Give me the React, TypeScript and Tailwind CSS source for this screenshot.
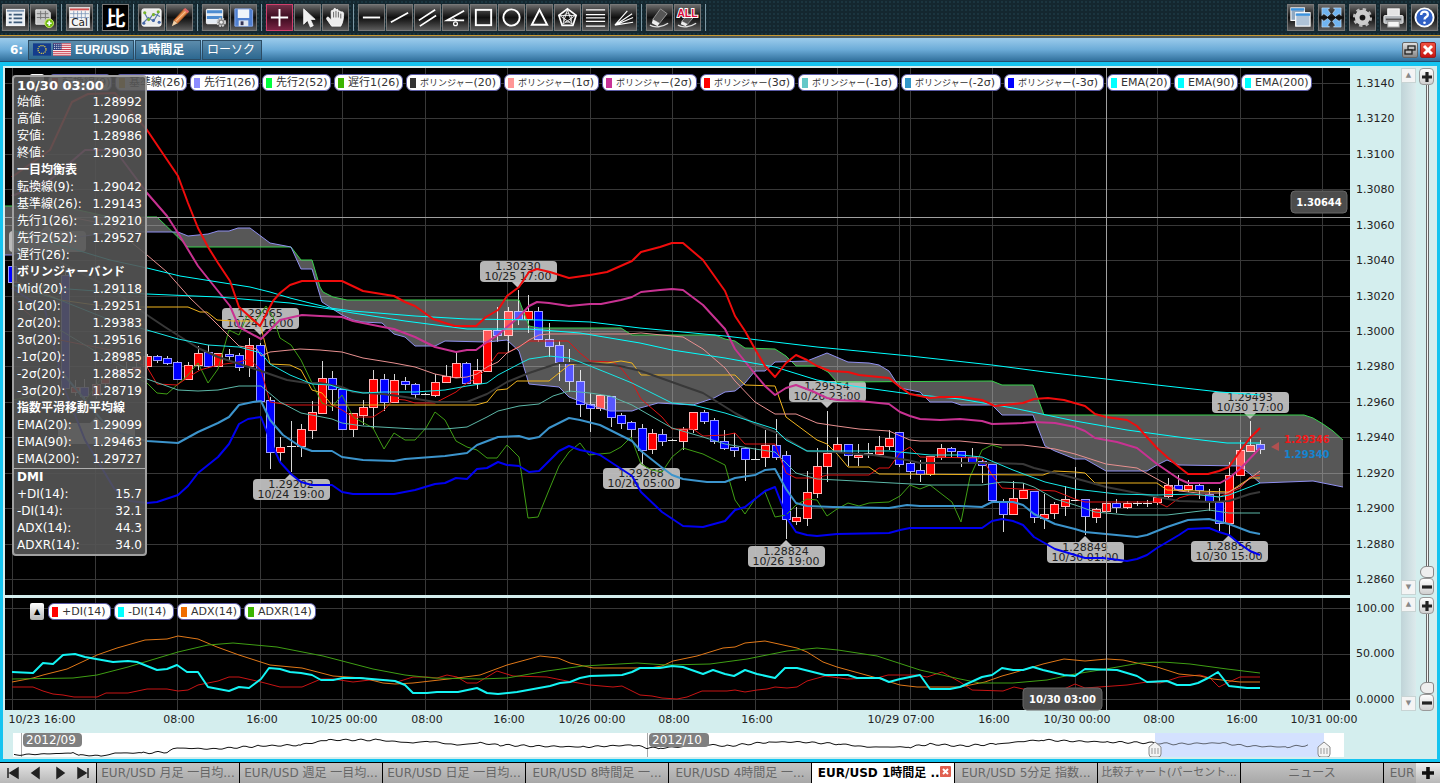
import type { ReactNode } from "react";

type Series = { color: string; width: number; points: string };
type Chip = { color: string; kana?: string; text: string; width: string };

// x, high, body top, body bottom, low, direction (u = up, d = down, n = flat)
const candles = `
12 262 266 282 285 d|65 270 275 388 392 d|75 380 387 392 396 u|84 379 387 396 404 d|96 376 384 395 399 u|105 372 378 383 388 u
116 366 370 374 378 d|126 362 369 372 377 u|136 360 367 371 376 u|147 354 356 366 368 u|157 355 356 360 363 d|167 356 358 363 365 d
177 361 362 379 379 d|188 362 365 379 379 u|198 346 353 365 370 u|208 345 352 366 368 d|218 353 353 366 367 u|229 349 354 355 360 d
239 353 355 367 371 d|249 338 345 366 377 u|260 343 345 401 401 d|270 397 400 452 469 d|280 437 447 452 463 u|291 421 446 447 472 n
301 424 429 446 457 u|312 401 412 430 439 u|322 361 378 413 413 u|332 371 378 389 411 d|342 389 389 429 429 d|353 413 413 429 437 u
363 400 407 415 425 u|373 370 379 407 429 u|384 374 379 402 411 d|394 374 380 402 403 u|405 377 381 384 390 d|415 383 384 394 398 d
425 393 394 394 395 n|435 374 382 395 397 u|446 365 376 382 383 u|456 352 363 377 377 u|466 362 363 383 383 d|477 359 370 383 389 u
487 330 330 371 371 u|497 307 330 335 342 d|508 307 311 335 353 u|518 290 311 319 325 d|528 295 311 319 333 u|538 307 311 339 342 d
549 323 339 346 357 d|559 341 345 362 381 d|569 349 363 381 392 d|580 370 381 404 417 d|590 393 404 408 432 d|600 394 395 408 411 u
611 396 396 417 427 d|621 413 415 423 429 d|631 421 422 429 438 d|642 424 428 450 465 d|652 429 433 449 454 u|662 429 434 441 446 d
672 439 440 440 441 n|683 427 429 441 450 u|693 412 412 429 433 u|704 410 412 421 424 d|714 418 420 441 444 d|724 430 441 448 450 d
734 433 447 450 457 d|745 447 448 459 481 d|755 448 459 459 460 n|765 430 445 457 467 u|776 419 445 457 460 d|786 451 455 519 539 d
796 507 517 521 525 u|807 471 492 518 526 u|817 448 466 493 498 u|827 411 453 466 482 u|837 437 444 452 453 u|848 444 444 455 466 d
858 444 455 457 466 u|868 443 453 453 458 n|879 436 446 454 456 u|889 430 438 446 450 u|899 432 432 464 467 d|910 461 463 471 479 d
920 460 470 474 482 d|930 456 456 474 476 u|941 444 448 457 460 u|951 447 448 451 458 d|961 451 451 457 467 d|972 448 457 462 464 d
982 460 461 465 483 d|992 464 464 500 502 d|1003 499 501 514 532 d|1013 481 498 514 515 u|1023 483 490 498 499 u|1034 491 491 517 523 d
1044 494 514 518 529 u|1054 502 504 513 519 u|1065 486 499 506 516 u|1075 467 500 500 501 n|1085 499 499 516 535 d|1096 508 509 517 523 u
1106 499 503 511 512 u|1116 499 503 507 513 d|1127 501 503 507 509 u|1137 501 503 503 506 n|1147 500 503 503 507 n|1157 496 497 502 505 u
1168 478 485 496 498 u|1178 475 485 489 491 d|1188 480 485 489 492 u|1199 483 485 490 499 d|1209 489 494 501 511 d|1219 488 502 523 531 d
1229 462 475 523 535 u|1240 440 450 475 475 u|1250 421 445 451 452 u|1260 440 444 449 454 d`
  .trim()
  .split(/[|\n]/)
  .map((row) => {
    const [x, high, top, bottom, low, dir] = row.split(" ");
    return { x: +x, high: +high, top: +top, bottom: +bottom, low: +low, dir };
  });

const spanB =
  "5,206 12,206 60,206 110,217 157,217 188,247 291,247 301,260 312,260 320,287 323,292 333,297 347,300 519,300 529,326 539,328 621,328 632,335 715,335 725,339 735,341 745,348 775,349 786,356 796,366 817,366 828,372 837,382 992,381 1002,385 1033,385 1044,415 1304,415 1313,418 1323,424 1333,431 1343,440";
const spanA =
  "5,255 12,255 60,240 110,232 178,232 188,236 208,234 218,231 229,231 238,228 250,228 270,243 291,247 301,269 312,269 322,302 342,315 353,320 363,322 382,323 394,334 405,337 415,346 435,346 445,341 487,342 507,340 519,351 529,384 539,385 559,387 569,397 590,405 610,411 632,411 640,408 658,403 693,405 714,398 725,392 735,391 745,383 755,371 765,371 775,362 807,361 827,353 848,362 869,363 879,365 889,371 900,388 920,392 930,402 952,402 961,405 992,405 1002,415 1033,415 1045,446 1055,451 1075,459 1085,459 1106,471 1147,471 1157,465 1167,460 1179,465 1240,466 1250,474 1260,483 1313,481 1323,483 1343,487";
const cloud = spanB + " " + spanA.split(" ").reverse().join(" ");

const overlays: Series[] = [
  { color: "#38d04c", width: 1, points: spanB },
  { color: "#8f8ff0", width: 1, points: spanA },
  // lagging span
  { color: "#3f9e14", width: 1, points: "12,400 40,395 75,415 100,380 125,372 147,383 157,393 167,394 188,375 198,363 208,383 218,369 229,330 239,335 247,316 255,322 266,306 273,317 280,338 291,345 301,360 312,383 322,403 332,407 342,395 353,417 373,428 384,449 394,433 405,440 415,440 426,428 435,412 445,420 456,441 467,447 477,450 487,458 497,458 507,445 519,457 528,518 538,517 549,490 559,466 569,452 580,443 589,455 610,453 621,447 631,437 641,464 652,470 662,472 672,457 683,448 703,454 725,465 735,500 745,514 755,499 765,492 775,517 786,515 796,505 807,499 817,500 827,516 837,509 848,503 859,506 869,503 889,502 900,496 910,485 920,489 930,485 952,502 961,522 970,477 982,450 992,445 1002,448" },
  // conversion and base line
  { color: "#e01414", width: 1, points: "12,300 60,340 110,350 147,367 157,384 177,385 187,378 200,370 218,365 239,362 249,359 261,370 270,402 290,405 322,405 332,405 342,410 353,417 373,417 384,410 394,399 405,400 415,403 435,403 456,392 467,383 477,378 487,368 498,353 507,353 529,341 568,341 580,353 590,361 613,362 621,368 632,382 641,399 662,417 672,429 693,429 703,436 725,435 735,433 745,444 775,444 786,473 796,478 817,478 827,475 869,475 879,468 889,468 900,453 910,447 920,457 982,458 992,475 1002,488 1055,491 1075,499 1085,502 1157,502 1167,507 1179,498 1189,495 1207,495 1219,497 1240,488 1250,477 1260,475" },
  { color: "#f0b41e", width: 1, points: "12,280 60,300 110,307 188,307 200,312 207,312 217,320 233,321 255,321 261,327 270,364 290,365 301,370 312,390 322,393 332,405 476,405 487,402 497,390 507,389 517,381 549,381 569,365 580,363 607,363 621,361 632,363 641,375 735,375 745,385 775,386 786,417 817,440 827,444 838,455 848,467 869,467 879,474 1043,475 1054,471 1075,472 1085,473 1095,483 1157,483 1167,490 1229,492 1250,478 1260,478" },
  // Bollinger bands, centre first
  { color: "#383838", width: 2, points: "60,262 110,288 147,315 165,327 198,348 218,357 261,371 287,380 307,383 320,383 342,387 353,392 383,394 405,397 435,402 467,402 487,394 507,382 529,373 559,363 590,363 620,366 641,371 683,386 703,393 735,413 755,424 775,432 807,451 833,452 873,455 907,460 920,463 993,463 1023,464 1034,468 1055,473 1085,481 1106,487 1147,495 1179,501 1213,502 1229,501 1250,494 1260,492" },
  { color: "#e89090", width: 1, points: "60,215 110,225 147,255 167,272 190,298 213,320 239,346 257,349 261,356 270,352 300,349 320,350 342,352 363,358 394,363 415,367 435,374 456,378 467,377 477,374 487,367 498,362 507,353 519,347 529,340 539,335 549,334 627,334 641,333 683,337 703,349 725,368 735,381 755,402 775,414 796,414 817,423 837,426 859,429 889,431 910,440 920,441 960,441 1002,445 1023,445 1055,449 1075,454 1106,464 1137,468 1157,479 1179,491 1198,493 1227,493 1240,486 1260,471" },
  { color: "#c83292", width: 2, points: "12,196 50,180 85,150 115,150 147,193 167,216 178,233 198,266 218,291 230,306 239,327 261,339 280,320 302,315 320,316 342,317 353,321 383,327 394,329 415,337 435,347 456,352 467,350 476,350 487,342 498,335 507,327 519,317 529,306 537,302 549,303 569,306 590,304 601,304 621,300 632,297 641,292 660,290 672,289 683,290 703,305 725,329 735,349 755,374 765,386 775,395 786,388 796,385 812,391 827,398 837,400 859,401 889,404 900,412 910,416 920,419 940,420 960,419 982,421 992,424 1023,423 1034,422 1055,423 1075,427 1085,431 1095,438 1117,442 1137,448 1157,464 1179,479 1188,483 1220,483 1229,478 1240,469 1260,448" },
  { color: "#5cb8a8", width: 1, points: "60,330 110,360 147,379 178,390 198,391 218,390 239,386 261,386 280,402 301,413 322,417 332,419 342,423 363,426 415,429 445,429 467,427 487,417 498,411 519,406 539,404 553,396 569,391 590,393 610,396 632,405 672,428 703,437 725,444 755,449 775,452 786,463 796,473 817,479 837,480 930,485 982,485 1002,482 1023,483 1034,487 1055,499 1075,505 1095,512 1127,515 1167,515 1209,510 1229,513 1260,513" },
  { color: "#3c94cc", width: 2, points: "60,370 110,430 147,441 178,443 198,432 218,423 229,417 239,405 253,402 261,401 270,420 283,435 301,447 312,451 332,451 342,457 363,460 394,461 405,459 445,456 467,453 477,445 498,437 519,436 529,439 539,437 549,428 569,418 580,420 600,425 632,441 641,451 660,466 672,475 683,479 707,482 725,482 735,478 755,475 765,470 775,469 786,489 796,503 807,506 833,507 889,508 907,505 920,506 960,506 982,507 992,502 1013,502 1023,505 1034,514 1055,524 1075,529 1085,532 1106,534 1137,537 1147,535 1167,527 1188,520 1209,519 1229,524 1250,532 1260,534" },
  { color: "#00ffff", width: 1, points: "12,230 60,245 110,260 147,268 180,276 218,282 250,287 270,292 290,298 330,308 353,311 415,316 467,319 539,320 590,322 640,328 672,331 725,336 775,342 817,347 910,356 992,365 1045,372 1106,379 1157,385 1220,392 1260,395" },
  { color: "#00ffff", width: 1, points: "12,285 110,292 147,294 218,297 290,303 330,309 353,313 405,321 467,329 529,329 580,333 640,343 672,350 725,358 775,367 817,380 859,387 910,394 960,399 1013,408 1075,421 1127,430 1193,439 1227,443 1260,443" },
  { color: "#18e8e8", width: 1, points: "12,285 60,300 110,320 147,330 178,339 208,345 239,347 261,353 270,364 290,375 312,384 330,385 342,389 363,393 384,392 415,392 445,390 467,386 487,383 498,375 519,364 529,359 549,356 569,358 580,362 610,374 632,383 672,403 693,405 725,413 775,429 786,440 807,451 889,451 930,455 960,455 982,457 1013,470 1045,482 1075,489 1117,494 1157,495 1193,494 1219,497 1229,495 1260,483" },
  { color: "#0000f0", width: 2, points: "12,288 45,310 65,390 85,440 115,490 130,501 147,503 157,502 178,495 188,486 198,473 218,457 229,444 239,424 248,419 261,417 270,440 280,462 291,474 301,482 312,485 332,485 342,492 353,494 394,494 415,490 435,484 445,483 456,478 467,479 477,469 487,468 498,462 507,465 519,466 529,472 539,471 559,451 569,446 580,450 590,452 600,455 632,476 641,492 662,512 683,526 703,527 725,521 735,510 745,507 765,491 775,487 788,520 796,532 807,535 817,536 837,534 889,533 900,530 910,528 982,528 992,521 1002,519 1013,521 1023,525 1034,537 1055,549 1075,555 1085,558 1103,558 1127,561 1137,559 1147,555 1157,548 1179,535 1188,529 1209,528 1219,532 1229,535 1240,544 1250,551 1260,555" },
  { color: "#f00c0c", width: 2, points: "12,177 50,150 72,102 88,94 115,93 147,130 178,176 188,203 198,228 208,247 218,263 230,281 239,307 260,326 273,301 280,293 290,285 302,281 342,281 363,291 394,296 405,302 415,306 433,319 445,323 455,326 476,326 486,317 498,310 507,296 519,287 529,272 537,269 550,272 569,278 590,275 607,272 632,261 641,252 660,247 672,243 683,243 703,260 725,291 735,316 745,331 755,349 765,366 775,377 786,363 796,355 807,360 817,366 830,371 848,372 859,375 889,378 900,387 910,394 930,398 940,397 961,397 982,400 995,406 1023,403 1034,399 1048,398 1064,400 1085,406 1095,414 1106,417 1127,420 1137,426 1145,435 1157,448 1167,457 1179,467 1188,474 1208,474 1219,471 1229,467 1240,451 1250,438 1260,428" },
];

const dmi: Series[] = [
  { color: "#c81414", width: 1, points: "12,687 33,687 43,691 53,694 63,695 74,697 97,697 106,693 128,693 147,689 167,689 178,691 188,690 198,685 218,681 229,677 239,677 261,682 280,687 302,687 321,679 333,679 353,682 370,680 387,680 397,682 413,677 427,677 437,678 447,675 457,677 467,683 477,683 497,671 513,676 547,677 567,681 590,685 613,687 622,686 640,695 652,696 662,698 677,699 687,697 702,691 727,691 735,690 745,692 757,690 767,689 775,687 787,688 797,687 807,681 825,676 847,679 877,678 888,675 917,675 927,677 942,672 960,682 972,690 1003,691 1014,687 1023,689 1064,689 1075,684 1085,688 1127,685 1147,682 1160,683 1167,681 1179,677 1200,675 1210,678 1219,687 1229,682 1240,677 1260,677" },
  { color: "#e07818", width: 1, points: "12,682 33,678 43,675 67,669 97,655 117,648 145,640 167,639 178,636 198,639 217,647 239,655 270,665 302,668 333,676 363,678 383,683 395,684 413,683 457,678 480,675 507,665 540,656 558,658 570,663 593,668 650,668 662,666 673,661 697,656 723,648 735,647 745,643 765,641 797,648 807,652 823,662 837,667 877,678 900,685 917,687 960,687 985,682 1002,676 1013,673 1043,664 1064,659 1085,661 1107,659 1123,660 1137,663 1157,667 1179,674 1200,676 1213,679 1240,682 1260,682" },
  { color: "#3f9e14", width: 1, points: "12,679 73,678 97,675 128,667 178,652 208,645 233,643 277,647 323,656 373,669 405,675 433,678 480,679 507,678 547,671 583,666 637,663 667,665 710,664 747,659 787,651 817,648 838,650 877,656 920,670 960,679 980,683 1013,683 1047,680 1075,674 1106,669 1140,663 1163,662 1190,664 1227,669 1260,673" },
  { color: "#14f4f4", width: 2, points: "12,672 33,673 43,663 53,664 63,655 75,654 85,657 113,662 128,661 137,662 157,670 167,669 177,665 187,672 198,672 208,687 229,691 239,687 249,688 261,679 269,668 280,669 290,672 301,673 312,675 321,680 333,680 343,678 360,678 383,680 395,681 405,685 413,693 427,693 437,692 458,692 477,688 487,693 498,694 517,692 550,686 560,683 570,682 580,678 590,676 622,675 632,672 640,668 660,668 672,666 683,667 703,674 713,670 725,674 734,676 745,670 757,674 775,678 785,668 797,668 825,675 848,675 857,678 880,678 889,682 900,679 920,675 930,689 950,689 960,687 982,677 992,675 1002,668 1013,670 1023,670 1033,667 1043,670 1064,675 1075,676 1085,669 1117,670 1137,676 1147,682 1167,681 1177,685 1190,685 1198,683 1208,678 1218,672 1229,686 1247,688 1260,688" },
];

const history: [number, number][] = [
  [14, 755], [73, 753], [80, 755], [103, 756], [115, 753], [143, 753], [167, 752], [177, 748], [213, 749], [260, 746],
  [300, 745], [328, 740], [377, 740], [413, 743], [427, 741], [457, 745], [480, 743], [500, 745], [533, 746], [583, 747],
  [633, 745], [647, 748], [660, 748], [710, 745], [727, 746], [770, 742], [800, 742], [840, 744], [867, 747], [910, 747],
  [930, 744], [960, 746], [997, 744], [1027, 741], [1043, 740], [1067, 741], [1107, 742], [1155, 743], [1173, 744],
  [1220, 743], [1247, 746], [1287, 747], [1310, 745],
];

// fills in small swings between the stored points
function historyLine() {
  const out: string[] = [];
  for (let i = 0; i < history.length - 1; i++) {
    const [x1, y1] = history[i];
    const [x2, y2] = history[i + 1];
    for (let x = x1; x < x2; x += 3) {
      const y = y1 + ((y2 - y1) * (x - x1)) / (x2 - x1);
      out.push(`${x},${(y + Math.sin(x * 1.7) * 0.5 + Math.sin(x * 0.43) * 0.5).toFixed(1)}`);
    }
  }
  return out.join(" ");
}

const gridX = [12, 95, 177, 260, 342, 425, 507, 590, 672, 755, 837, 899, 910, 992, 1075, 1157, 1240, 1322];
const prices = ["1.3140", "1.3120", "1.3100", "1.3080", "1.3060", "1.3040", "1.3020", "1.3000", "1.2980", "1.2960", "1.2940", "1.2920", "1.2900", "1.2880", "1.2860"];
const priceY = (i: number) => Math.round(83 + i * 35.43);

const times = [
  { x: 42, label: "10/23 16:00" },
  { x: 179, label: "08:00" },
  { x: 262, label: "16:00" },
  { x: 344, label: "10/25 00:00" },
  { x: 427, label: "08:00" },
  { x: 509, label: "16:00" },
  { x: 592, label: "10/26 00:00" },
  { x: 674, label: "08:00" },
  { x: 757, label: "16:00" },
  { x: 901, label: "10/29 07:00" },
  { x: 994, label: "16:00" },
  { x: 1077, label: "10/30 00:00" },
  { x: 1159, label: "08:00" },
  { x: 1242, label: "16:00" },
  { x: 1324, label: "10/31 00:00" },
];

const callouts = [
  { x: 47, y: 231, price: "", time: "", down: false },
  { x: 96, y: 423, price: "", time: "", down: false },
  { x: 260, y: 308, price: "1.29965", time: "10/24 16:00", down: true },
  { x: 291, y: 479, price: "1.29202", time: "10/24 19:00", down: false },
  { x: 518, y: 261, price: "1.30230", time: "10/25 17:00", down: true },
  { x: 641, y: 468, price: "1.29268", time: "10/26 05:00", down: false },
  { x: 786, y: 546, price: "1.28824", time: "10/26 19:00", down: false },
  { x: 827, y: 381, price: "1.29554", time: "10/26 23:00", down: true },
  { x: 1085, y: 542, price: "1.28849", time: "10/30 01:00", down: false },
  { x: 1229, y: 541, price: "1.28856", time: "10/30 15:00", down: false },
  { x: 1250, y: 392, price: "1.29493", time: "10/30 17:00", down: true },
];

const mainLegend: Chip[] = [
  { color: "bg-red-500", text: "転換線(9)", width: "w-[64px]" },
  { color: "bg-[#f0b41e]", text: "基準線(26)", width: "w-[72px]" },
  { color: "bg-[#8c8cff]", text: "先行1(26)", width: "w-[69px]" },
  { color: "bg-[#00ff3c]", text: "先行2(52)", width: "w-[69px]" },
  { color: "bg-[#3cb400]", text: "遅行1(26)", width: "w-[69px]" },
  { color: "bg-[#333333]", kana: "ボリンジャー", text: "(20)", width: "w-[95px]" },
  { color: "bg-[#ff9696]", kana: "ボリンジャー", text: "(1σ)", width: "w-[95px]" },
  { color: "bg-[#c83296]", kana: "ボリンジャー", text: "(2σ)", width: "w-[95px]" },
  { color: "bg-[#ff0000]", kana: "ボリンジャー", text: "(3σ)", width: "w-[95px]" },
  { color: "bg-[#64c8c8]", kana: "ボリンジャー", text: "(-1σ)", width: "w-[100px]" },
  { color: "bg-[#3296c8]", kana: "ボリンジャー", text: "(-2σ)", width: "w-[100px]" },
  { color: "bg-[#0000ff]", kana: "ボリンジャー", text: "(-3σ)", width: "w-[100px]" },
  { color: "bg-[#00ffff]", text: "EMA(20)", width: "w-[64px]" },
  { color: "bg-[#00ffff]", text: "EMA(90)", width: "w-[64px]" },
  { color: "bg-[#00ffff]", text: "EMA(200)", width: "w-[71px]" },
];

const dmiLegend: Chip[] = [
  { color: "bg-[#ff0000]", text: "+DI(14)", width: "w-[63px]" },
  { color: "bg-[#00ffff]", text: "-DI(14)", width: "w-[60px]" },
  { color: "bg-[#f06e00]", text: "ADX(14)", width: "w-[64px]" },
  { color: "bg-[#3cb400]", text: "ADXR(14)", width: "w-[72px]" },
];

const readout: [string, string?][] = [
  ["始値:", "1.28992"],
  ["高値:", "1.29068"],
  ["安値:", "1.28986"],
  ["終値:", "1.29030"],
  ["一目均衡表"],
  ["転換線(9):", "1.29042"],
  ["基準線(26):", "1.29143"],
  ["先行1(26):", "1.29210"],
  ["先行2(52):", "1.29527"],
  ["遅行(26):", ""],
  ["ボリンジャーバンド"],
  ["Mid(20):", "1.29118"],
  ["1σ(20):", "1.29251"],
  ["2σ(20):", "1.29383"],
  ["3σ(20):", "1.29516"],
  ["-1σ(20):", "1.28985"],
  ["-2σ(20):", "1.28852"],
  ["-3σ(20):", "1.28719"],
  ["指数平滑移動平均線"],
  ["EMA(20):", "1.29099"],
  ["EMA(90):", "1.29463"],
  ["EMA(200):", "1.29727"],
];

const dmiReadout: [string, string?][] = [
  ["DMI"],
  ["+DI(14):", "15.7"],
  ["-DI(14):", "32.1"],
  ["ADX(14):", "44.3"],
  ["ADXR(14):", "34.0"],
];

const tabs = [
  { label: "EUR/USD 月足 一目均..." },
  { label: "EUR/USD 週足 一目均..." },
  { label: "EUR/USD 日足 一目均..." },
  { label: "EUR/USD 8時間足 一..." },
  { label: "EUR/USD 4時間足 一..." },
  { label: "EUR/USD 1時間足 ...", active: true },
  { label: "EUR/USD 5分足 指数..." },
  { label: "比較チャート(パーセント...", small: true },
  { label: "ニュース" },
];

/* ---------- Toolbar ---------- */

function Tool({ label, selected, children }: { label: string; selected?: boolean; children: ReactNode }) {
  return (
    <button
      type="button"
      aria-label={label}
      className={`h-[27px] w-[27px] shrink-0 border p-px ${
        selected
          ? "border-[#d0406c] bg-linear-to-b from-[#703048] via-[#3c0c20] to-[#7a2444]"
          : "border-[#777777] bg-linear-to-b from-[#6c6c6c] via-[#101010] to-[#5c5c5c]"
      }`}
    >
      <svg viewBox="0 0 24 24" className="block h-full w-full" fill="none" stroke="#fff" strokeWidth="1.8">
        {children}
      </svg>
    </button>
  );
}

function Divider() {
  return <span className="mx-[3px] h-[27px] w-px shrink-0 bg-[#7c98a4]" />;
}

function Toolbar() {
  return (
    <div className="flex h-[35px] items-center justify-between overflow-hidden bg-[#14272f] bg-[radial-gradient(#1b353f_1px,transparent_1px)] bg-size-[4px_4px] px-0.5">
      <div className="flex items-center gap-px">
        <Tool label="一覧">
          <rect x="2.500" y="3.500" width="19" height="17" fill="#e8eef4" stroke="#fff" strokeWidth="1" />
          <path d="M3 5h18" stroke="#8098b4" strokeWidth="2" />
          <path d="M5 9h3M5 13h3M5 17h3M10 9h9M10 13h9M10 17h9" stroke="#3c5a78" strokeWidth="1.800" />
        </Tool>
        <Tool label="チャート追加">
          <path d="M4 4h12l3 3v12H4z" fill="#c8c8c8" stroke="#eee" strokeWidth="1" />
          <path d="M5 8h12M5 12h13M9 5v9M14 5v9" stroke="#777" strokeWidth="1" />
          <circle cx="18" cy="18" r="4.5" fill="#6cb80c" stroke="#c8ec60" strokeWidth="1" />
          <path d="M18 15.5v5M15.5 18h5" stroke="#fff" />
        </Tool>
        <Divider />
        <Tool label="カレンダー">
          <rect x="1.5" y="1.5" width="21" height="21" fill="#f4f4f4" stroke="#ddd" strokeWidth="1" />
          <path d="M2 3.5h20" stroke="#d05050" strokeWidth="2" />
          <path d="M2 8h20M2 12h20M6 5v9M10 5v9M14 5v9M18 5v9" stroke="#7a94b8" strokeWidth="0.8" />
          <text x="12" y="21" textAnchor="middle" fill="#222" stroke="none" className="font-['DejaVu_Sans',sans-serif] text-[11px]">Cal</text>
        </Tool>
        <Divider />
        <button type="button" className="h-[27px] w-[27px] border border-[#777777] bg-black font-['Noto_Sans_CJK_JP',sans-serif] text-[20px] leading-[24px] font-bold text-white">比</button>
        <Divider />
        <Tool label="テクニカル">
          <rect x="2" y="3" width="20" height="18" rx="2" fill="#ececec" stroke="#fff" strokeWidth="1" />
          <path d="M4 6l5 9 5-7 7 3M3 18l6-6 5 4 6-10" stroke="#5878a8" strokeWidth="1.2" />
          <g fill="#78b428" stroke="none"><circle cx="5" cy="7" r="1.6" /><circle cx="9" cy="14" r="1.6" /><circle cx="14" cy="9" r="1.6" /><circle cx="19" cy="6" r="1.6" /></g>
          <g fill="#4668a8" stroke="none"><circle cx="4" cy="18" r="1.6" /><circle cx="14" cy="15" r="1.6" /><circle cx="20" cy="17" r="1.6" /></g>
        </Tool>
        <Tool label="描画">
          <path d="M6 15L17 3l4 3.5L10 18z" fill="#e08848" stroke="#a85420" strokeWidth="1" />
          <path d="M8 16L19 5" stroke="#f8c090" strokeWidth="1.2" />
          <path d="M6 15l4 3-6 3z" fill="#f0d0a8" stroke="none" />
          <path d="M16 4l2-2 4 3.500-1.500 2z" fill="#e06868" stroke="none" />
        </Tool>
        <Divider />
        <Tool label="表示設定">
          <rect x="2.500" y="3.500" width="17" height="15" rx="1" fill="#e4ecf4" stroke="#fff" strokeWidth="1" />
          <path d="M3 6h16M3 12h16" stroke="#4c8cd0" strokeWidth="3" />
          <circle cx="18" cy="17" r="4" fill="#888" stroke="#ccc" strokeWidth="2" strokeDasharray="2 1.200" />
          <circle cx="18" cy="17" r="1.500" fill="#eee" stroke="none" />
        </Tool>
        <Tool label="保存">
          <path d="M3 3h17l1.500 1.500V21H3z" fill="#5080d0" stroke="#88a8e8" strokeWidth="1" />
          <rect x="6" y="3.500" width="12" height="9" fill="#f0f4fa" stroke="none" />
          <rect x="7" y="15" width="10" height="6" fill="#e0e6f0" stroke="none" />
          <rect x="9" y="16" width="3" height="4" fill="#335" stroke="none" />
        </Tool>
        <Divider />
        <Tool label="十字カーソル" selected><path d="M12 3v18M3 12h18" strokeWidth="2" /></Tool>
        <Tool label="選択"><path d="M8 3v16l4-4 3 7 3-1.500-3-6.500h5z" fill="#eee" stroke="#fff" strokeWidth="0.8" /></Tool>
        <Tool label="移動">
          <path d="M8 21l-5-7c-1-2 1-3 2-2l2.500 2.500V6c0-2 2.500-2 2.500 0V4c0-2 2.500-2 2.500 0v1c0-2 2.500-2 2.500 0v1.500c0-2 2.500-1.500 2.500 0 1.500-1 3 0 3 1.500 0 4-.5 9-3 13z" fill="#eee" stroke="#fff" strokeWidth="0.8" />
          <path d="M10 6v6M12.500 5v7M15 6v6M17.500 8v5" stroke="#555" strokeWidth="0.9" />
        </Tool>
        <Divider />
        <Tool label="水平線"><path d="M3 12h18" strokeWidth="2" /></Tool>
        <Tool label="トレンドライン"><path d="M3 17L21 7" /></Tool>
        <Tool label="平行線"><path d="M3 15L20 4M4 21L21 10" /></Tool>
        <Tool label="角度線"><path d="M21 5L3 15h18" /><path d="M10 13l4 2" strokeWidth="1" /><circle cx="12" cy="18.500" r="2" strokeWidth="1.3" /></Tool>
        <Tool label="四角"><rect x="4" y="4" width="16" height="16" strokeWidth="2" /></Tool>
        <Tool label="円"><circle cx="12" cy="12" r="8.500" strokeWidth="2" /></Tool>
        <Tool label="三角"><path d="M12 4l8 15.500H4z" strokeWidth="2" /></Tool>
        <Tool label="ペンタゴン">
          <path d="M12 3l9 6.800-3.400 10.500H6.400L3 9.800z" strokeWidth="1.800" />
          <path d="M12 4l5 15L4 10h16L7 19z" strokeWidth="0.9" />
          <circle cx="12" cy="12.500" r="4.500" strokeWidth="0.8" />
        </Tool>
        <Tool label="フィボナッチ"><path d="M2 4h20M2 9h20M2 12.500h20M2 16h20M2 21h20" strokeWidth="1.300" /></Tool>
        <Tool label="ファン"><path d="M3 20L16 5M3 20L21 8M3 20L22 12M3 20L22 17" strokeWidth="1.200" /></Tool>
        <Divider />
        <Tool label="消去">
          <path d="M2 20c5 3 13 2 19-2" stroke="#ddd" strokeWidth="1.500" />
          <path d="M13 3l7 5-8 10-7-4z" fill="#555" stroke="#999" strokeWidth="1" />
          <path d="M5 14l7 4-2 3-6-3z" fill="#eee" stroke="none" />
        </Tool>
        <Tool label="すべて消去">
          <path d="M2 20c5 3 13 2 19-2" stroke="#ddd" strokeWidth="1.500" />
          <path d="M13 8l6 3-7 8-6-3z" fill="#555" stroke="#999" strokeWidth="1" />
          <path d="M6 16l6 3-2 2-5-2z" fill="#eee" stroke="none" />
          <text x="12" y="11" textAnchor="middle" fill="#d80c3c" stroke="#fff" strokeWidth="2" paintOrder="stroke" className="font-['Liberation_Sans_Narrow','Liberation_Sans',sans-serif] text-[11px] font-bold">ALL</text>
        </Tool>
        <Divider />
      </div>

      <div className="flex items-center gap-1">
        <Tool label="ウィンドウ">
          <rect x="2" y="2" width="14" height="13" fill="#90a8c0" stroke="#fff" strokeWidth="1.200" />
          <rect x="7" y="7" width="15" height="14" fill="#b0c4d8" stroke="#fff" strokeWidth="1.200" />
          <path d="M2 3.500h14M7 9h15" stroke="#3c94e0" strokeWidth="2.500" />
        </Tool>
        <Tool label="全画面">
          <g fill="#70b4f0" stroke="#d0e8ff" strokeWidth="0.6">
            <path d="M2 2h8L8 4l3 4-3 3-4-3-2 2z" />
            <path d="M22 2h-8l2 2-3 4 3 3 4-3 2 2z" />
            <path d="M2 22h8l-2-2 3-4-3-3-4 3-2-2z" />
            <path d="M22 22h-8l2-2-3-4 3-3 4 3 2-2z" />
          </g>
        </Tool>
        <Tool label="設定">
          <circle cx="12" cy="12" r="8.500" stroke="#bbb" strokeWidth="3" strokeDasharray="3.400 3.270" />
          <circle cx="12" cy="12" r="5.500" stroke="#ccc" strokeWidth="5" />
        </Tool>
        <Tool label="印刷">
          <rect x="6" y="3" width="12" height="9" fill="#e4e4e4" stroke="#fff" strokeWidth="1" />
          <rect x="2" y="10" width="20" height="8" rx="1" fill="#b4b8bc" stroke="#eee" strokeWidth="1" />
          <path d="M4 14h16" stroke="#555" />
          <rect x="6" y="16" width="12" height="6" fill="#f4f4f4" stroke="#999" strokeWidth="1" />
        </Tool>
        <Tool label="ヘルプ">
          <circle cx="12" cy="12" r="9.500" fill="#3060c4" stroke="#fff" strokeWidth="2" />
          <path d="M8.500 9.500c0-5 7-4.500 7-.5 0 2.500-3.500 2.500-3.500 5" strokeWidth="2.400" />
          <circle cx="12" cy="17.500" r="1.400" fill="#fff" stroke="none" />
        </Tool>
      </div>
    </div>
  );
}

/* ---------- Title bar ---------- */

function TitleBar() {
  const box = "flex h-5 items-center border border-[#2c4c64] bg-linear-to-b from-[#5c8cac] to-[#2c6890] px-1 text-white";
  return (
    <div className="flex h-6 items-center justify-between border-b border-[#245070] bg-linear-to-b from-[#9cccec] via-[#6cacd8] to-[#30709c] pr-1 pl-2.5 text-xs">
      <div className="flex items-center gap-px">
        <span className="w-[17px] font-bold text-white">6:</span>
        <button type="button" className={`${box} w-[106px] gap-0.5 font-['Liberation_Sans','Noto_Sans_CJK_JP',sans-serif] font-bold`}>
          <svg viewBox="0 0 19 13" className="h-[13px] w-[19px]">
            <rect width="19" height="13" fill="#143c8c" />
            <circle cx="9.500" cy="6.500" r="4.200" fill="none" stroke="#f0d840" strokeWidth="1.300" strokeDasharray="1.200 1" />
          </svg>
          <svg viewBox="0 0 19 13" className="h-[13px] w-[19px]">
            <rect width="19" height="13" fill="#fff" />
            <path d="M0 .5h19M0 2.500h19M0 4.500h19M0 6.500h19M0 8.500h19M0 10.500h19M0 12.500h19" stroke="#c83444" />
            <rect width="9" height="7" fill="#24387c" />
            <path d="M1 1.500h7M1 3.500h7M1 5.500h7" stroke="#fff" strokeDasharray="1 1" />
          </svg>
          <span className="pl-0.5">EUR/USD</span>
        </button>
        <button type="button" className={`${box} w-[66px] font-bold`}>1時間足</button>
        <button type="button" className={`${box} w-[60px]`}>ローソク</button>
      </div>
      <div className="flex gap-0.5">
        <button type="button" aria-label="元に戻す" className="h-4 w-4 rounded-xs border border-[#666666] bg-linear-to-b from-[#e0e0e0] to-[#888888]">
          <svg viewBox="0 0 14 14" className="block" fill="none" stroke="#222" strokeWidth="1.300"><rect x="5" y="3" width="7" height="4" /><rect x="2" y="7" width="7" height="4" fill="#bbb" /></svg>
        </button>
        <button type="button" aria-label="閉じる" className="h-4 w-4 rounded-xs border border-[#902020] bg-linear-to-b from-[#f05040] to-[#c81010]">
          <svg viewBox="0 0 14 14" className="block" stroke="#fff" strokeWidth="3"><path d="M3 3l8 8M11 3l-8 8" /></svg>
        </button>
      </div>
    </div>
  );
}

/* ---------- Chart pieces ---------- */

function Legend({ items }: { items: Chip[] }) {
  return (
    <div className="absolute top-1.5 left-[25px] flex h-[17px] items-center gap-[3px]">
      <button type="button" aria-label="凡例を閉じる" className="mr-px h-[17px] w-[14px] rounded-xs bg-linear-to-b from-white to-[#b8b8b8] text-center text-[8px] leading-[17px] text-black">▲</button>
      {items.map((c) => (
        <span key={(c.kana ?? "") + c.text} className={`${c.width} flex h-[17px] shrink-0 items-center gap-1 rounded-md border border-[#5c5ca8] bg-white pl-[3px] text-[11px] leading-none whitespace-nowrap text-[#333333]`}>
          <i className={`${c.color} h-[10px] w-[6px] shrink-0`} />
          <span>
            {c.kana && <span className="text-[9px]">{c.kana}</span>}
            {c.text}
          </span>
        </span>
      ))}
    </div>
  );
}

function Lines({ series }: { series: Series[] }) {
  return (
    <g fill="none" strokeLinejoin="round">
      {series.map((s, i) => (
        <polyline key={i} points={s.points} stroke={s.color} strokeWidth={s.width} />
      ))}
    </g>
  );
}

function Badge({ x, y, w, label }: { x: number; y: number; w: number; label: string }) {
  return (
    <g>
      <rect x={x} y={y} width={w} height="22" rx="4" fill="#4c4c4c" stroke="#666" />
      <text x={x + w / 2} y={y + 15} textAnchor="middle" fill="#fff" className="text-[10px] font-bold">{label}</text>
    </g>
  );
}

function PriceChart() {
  return (
    <svg viewBox="5 68 1396 527" preserveAspectRatio="xMaxYMin slice" className="block h-[527px] w-full text-[11px]">
      <rect x="5" y="68" width="1345" height="527" fill="#000" />
      <g stroke="#383838" shapeRendering="crispEdges">
        {gridX.map((x) => <line key={x} x1={x} x2={x} y1="68" y2="595" />)}
        {prices.map((p, i) => <line key={p} x1="5" x2="1350" y1={priceY(i)} y2={priceY(i)} />)}
      </g>
      <g shapeRendering="crispEdges">
        {candles.map((c) => (
          <g key={c.x}>
            <line x1={c.x} x2={c.x} y1={c.high} y2={c.low} stroke="#d8d8d8" />
            {c.dir === "n" ? (
              <line x1={c.x - 4} x2={c.x + 5} y1={c.top} y2={c.top} stroke="#e8e8e8" />
            ) : (
              <rect x={c.x - 4} y={c.top} width="8" height={Math.max(c.bottom - c.top, 2)} fill={c.dir === "u" ? "#ff0000" : "#0000ff"} stroke={c.dir === "u" ? "#ffb4b4" : "#9c9cff"} />
            )}
          </g>
        ))}
      </g>
      <polygon points={cloud} fill="#fff" fillOpacity="0.34" />
      {callouts.map((c) => (
        <g key={c.x}>
          <rect x={c.x - 38} y={c.y} width="77" height="21" rx="4" fill="#c0c0c0" fillOpacity="0.95" />
          <path d={c.down ? `M${c.x - 6} ${c.y + 21}h12l-6 6z` : `M${c.x - 6} ${c.y}h12l-6 -6z`} fill="#c0c0c0" />
          {c.price && <text x={c.x} y={c.y + 9} textAnchor="middle" fill="#222">{c.price}</text>}
          {c.time && <text x={c.x} y={c.y + 19} textAnchor="middle" fill="#222">{c.time}</text>}
        </g>
      ))}
      <Lines series={overlays} />
      <g shapeRendering="crispEdges" stroke="#a0a0a0">
        <line x1="1106" x2="1106" y1="68" y2="595" />
        <line x1="5" x2="1350" y1="217" y2="217" />
      </g>
      <path d="M1271 447l8-5v9z" fill="#b05050" />
      <g className="text-[10px] font-bold">
        <text x="1284" y="443" fill="#f01818">1.29346</text>
        <text x="1284" y="458" fill="#1484d0">1.29340</text>
      </g>
      <Badge x={1291} y={191} w={56} label="1.30644" />
      <g fill="#222">
        {prices.map((p, i) => <text key={p} x="1356" y={priceY(i) + 4}>{p}</text>)}
      </g>
    </svg>
  );
}

function DmiChart() {
  return (
    <svg viewBox="5 597 1396 114" preserveAspectRatio="xMaxYMin slice" className="block h-[114px] w-full text-[11px]">
      <rect x="5" y="598" width="1345" height="112" fill="#000" />
      <g stroke="#383838" shapeRendering="crispEdges">
        {gridX.map((x) => <line key={x} x1={x} x2={x} y1="598" y2="710" />)}
        {[608, 654, 699].map((y) => <line key={y} x1="5" x2="1350" y1={y} y2={y} />)}
      </g>
      <Lines series={dmi} />
      <line x1="1106" x2="1106" y1="598" y2="710" stroke="#a0a0a0" shapeRendering="crispEdges" />
      <Badge x={1023} y={688} w={79} label="10/30 03:00" />
      <g fill="#222">
        <text x="1356" y="612">100.00</text>
        <text x="1356" y="657">50.000</text>
        <text x="1356" y="703">0.0000</text>
      </g>
    </svg>
  );
}

function RangeHandle({ x }: { x: number }) {
  return (
    <g>
      <path d={`M${x} 742l6 5v7q0 3-3 3h-6q-3 0-3-3v-7z`} fill="#f4f4f4" stroke="#888" />
      <path d={`M${x - 3} 748v6M${x} 748v6M${x + 3} 748v6`} stroke="#999" />
    </g>
  );
}

function Overview() {
  return (
    <svg viewBox="5 733 1429 24" preserveAspectRatio="xMaxYMin slice" className="block h-6 w-full text-xs">
      <rect x="13" y="733" width="1331" height="24" fill="#fff" />
      <rect x="1155" y="733" width="169" height="24" fill="#d4e2ff" />
      <path d="M21 733v24M647 733v24" stroke="#aaa" shapeRendering="crispEdges" />
      <polyline points={historyLine()} fill="none" stroke="#111" strokeWidth="1" />
      <rect x="1156" y="734" width="167" height="22" fill="#d4e2ff" fillOpacity="0.4" />
      <rect x="23" y="733" width="59" height="14" rx="4" fill="#808080" />
      <text x="26" y="744" fill="#fff">2012/09</text>
      <rect x="649" y="733" width="60" height="14" rx="4" fill="#808080" />
      <text x="652" y="744" fill="#fff">2012/10</text>
      <RangeHandle x={1155} />
      <RangeHandle x={1324} />
    </svg>
  );
}

function Readout() {
  const rows = (items: [string, string?][]) =>
    items.map(([name, value]) => (
      <tr key={name} className="h-[17px]">
        {value === undefined ? (
          <th colSpan={2} className="p-0 text-left font-bold">{name}</th>
        ) : (
          <>
            <th className="p-0 text-left font-normal">{name}</th>
            <td className="p-0 text-right">{value}</td>
          </>
        )}
      </tr>
    ));
  return (
    <div className="absolute top-[7px] left-[7px] z-10 w-[135px] rounded-sm border-2 border-[#a0a0a0] bg-[#555555]/90 text-xs leading-[17px] whitespace-nowrap text-white">
      <table className="w-full border-collapse [&_td]:pr-[3px] [&_th]:pl-[3px]">
        <thead>
          <tr className="h-[17px]">
            <th colSpan={2} className="p-0 text-left text-[13px] font-bold">10/30 03:00</th>
          </tr>
        </thead>
        <tbody>{rows(readout)}</tbody>
        <tbody className="border-t border-[#b0b0b0]">{rows(dmiReadout)}</tbody>
      </table>
    </div>
  );
}

function PanelControls({ name }: { name: string }) {
  const arrow = "h-[15px] w-[15px] border border-[#c8d4d4] bg-[#f4f4f4] text-center text-[7px] leading-[13px] text-[#888888]";
  const zoom = "flex h-[17px] w-[15px] shrink-0 items-center justify-center rounded-sm border border-[#999999] bg-linear-to-b from-white to-[#d0d0d0]";
  return (
    <div className="flex shrink-0 gap-[3px] pr-[3px]">
      <div className="flex flex-col justify-between bg-linear-to-r from-[#c0d4d8] to-[#dceaec]">
        <button type="button" aria-label={`${name} 上へ`} className={arrow}>▲</button>
        <button type="button" aria-label={`${name} 下へ`} className={arrow}>▼</button>
      </div>
      <div className="flex w-[15px] flex-col items-center justify-between">
        <button type="button" aria-label={`${name} 拡大`} className={zoom}>
          <svg viewBox="0 0 10 10" className="h-[10px] w-[10px]"><path d="M5 0v10M0 5h10" stroke="#222" strokeWidth="3.200" /></svg>
        </button>
        <input
          type="range"
          aria-label={`${name} 倍率`}
          defaultValue={0}
          className="my-2 min-h-0 w-[15px] flex-1 appearance-none bg-[linear-gradient(to_right,transparent_7px,#666_7px,#666_8px,#f4f4f4_8px,#f4f4f4_9px,#666_9px,#666_10px,transparent_10px)] [direction:rtl] [writing-mode:vertical-lr] [&::-webkit-slider-thumb]:h-[12px] [&::-webkit-slider-thumb]:w-[14px] [&::-webkit-slider-thumb]:appearance-none [&::-webkit-slider-thumb]:rounded-l-lg [&::-webkit-slider-thumb]:rounded-r-sm [&::-webkit-slider-thumb]:border [&::-webkit-slider-thumb]:border-[#888888] [&::-webkit-slider-thumb]:bg-[#eeeeee]"
        />
        <button type="button" aria-label={`${name} 縮小`} className={zoom}>
          <svg viewBox="0 0 10 10" className="h-[10px] w-[10px]"><path d="M0 5h10" stroke="#222" strokeWidth="3.200" /></svg>
        </button>
      </div>
    </div>
  );
}

function Tabs() {
  return (
    <div className="flex h-[21px] border-t border-black bg-[#b4b4b4] text-xs">
      <div className="flex w-[96px] shrink-0 items-center justify-between bg-linear-to-b from-[#e4e4e4] to-[#b8b8b8] px-1.5">
        {[
          { label: "最初", d: "M2 2v10M12 2v10L4 7z" },
          { label: "前へ", d: "M10 2v10L3 7z" },
          { label: "次へ", d: "M4 2v10l7-5z" },
          { label: "最後", d: "M12 2v10M2 2v10l8-5z" },
        ].map((b) => (
          <button key={b.label} type="button" aria-label={b.label}>
            <svg viewBox="0 0 14 14" className="h-[14px] w-[14px]" fill="#222" stroke="#222" strokeWidth="1.500"><path d={b.d} /></svg>
          </button>
        ))}
      </div>
      <div className="flex min-w-0 flex-1 overflow-hidden">
        {tabs.map((t) => (
          <button
            key={t.label}
            type="button"
            className={`relative h-5 w-[143px] shrink-0 overflow-hidden border-l border-black leading-[18px] whitespace-nowrap ${
              t.active ? "bg-white pr-1 font-bold text-black" : "bg-linear-to-b from-[#c4c4c4] to-[#a8a8a8] text-[#666666]"
            } ${t.small ? "text-[11px]" : ""}`}
          >
            {t.label}
            {t.active && (
              <svg viewBox="0 0 11 11" className="absolute top-[3px] right-[3px] h-[11px] w-[11px]">
                <rect width="11" height="11" rx="1" fill="#e06050" />
                <path d="M3 3l5 5M8 3l-5 5" stroke="#fff" strokeWidth="2" />
              </svg>
            )}
          </button>
        ))}
        <button type="button" className="h-5 min-w-0 flex-1 border-l border-black bg-linear-to-b from-[#c4c4c4] to-[#a8a8a8] pl-1 text-center leading-[18px] text-[#666666]">EUR</button>
      </div>
      <button type="button" aria-label="タブ追加" className="flex w-6 shrink-0 items-center justify-center bg-linear-to-b from-[#f0f0f0] to-[#b8b8b8]">
        <svg viewBox="0 0 12 12" className="h-3 w-3"><path d="M6 0v12M0 6h12" stroke="#111" strokeWidth="3.600" /></svg>
      </button>
    </div>
  );
}

export default function App() {
  return (
    <div className="flex min-h-screen flex-col overflow-hidden bg-[#14272f] font-['DejaVu_Sans','Noto_Sans_CJK_JP',sans-serif]">
      <Toolbar />
      <div className="h-[3px] border-t border-[#c89830] bg-[#4c5c60]" />
      <TitleBar />

      <div className="border-x-[3px] border-t-4 border-b-[3px] border-[#14c4f0] bg-[#d4eeee] py-0.5 pl-0.5">
        {/* Price panel */}
        <div className="mb-0.5 flex">
          <div className="relative min-w-0 flex-1">
            <PriceChart />
            <Legend items={mainLegend} />
            <Readout />
          </div>
          <PanelControls name="価格" />
        </div>

        {/* DMI panel */}
        <div className="flex">
          <div className="relative min-w-0 flex-1">
            <DmiChart />
            <Legend items={dmiLegend} />
          </div>
          <PanelControls name="DMI" />
        </div>

        {/* Time axis */}
        <div className="pr-[3px]">
          <svg viewBox="5 711 1429 22" preserveAspectRatio="xMaxYMin slice" className="block h-[22px] w-full text-[11px]" fill="#222">
            {times.map((t) => <text key={t.x} x={t.x} y="723" textAnchor="middle">{t.label}</text>)}
          </svg>
          <Overview />
        </div>
      </div>

      <Tabs />
    </div>
  );
}
